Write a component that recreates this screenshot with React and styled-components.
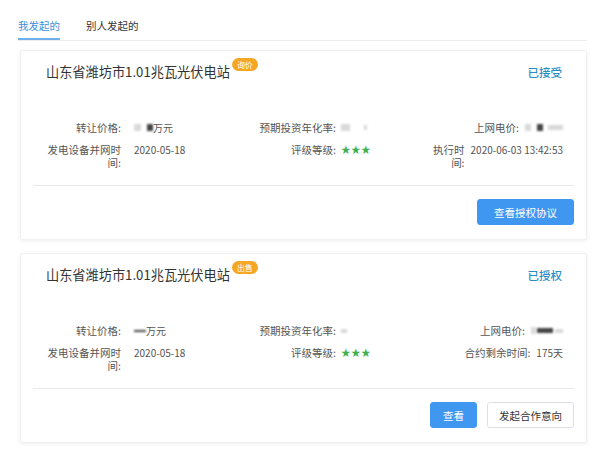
import styled, { createGlobalStyle } from 'styled-components';

const GlobalStyle = createGlobalStyle`
  body {
    margin: 0;
    background: #fff;
    font-family: "Noto Sans CJK SC", "Noto Sans", sans-serif;
    color: #333;
  }
`;

const Page = styled.div`
  width: 600px;
  height: 468px;
  overflow: hidden;
`;

const Inner = styled.div`
  padding: 0 13px 0 18px;
`;

const TabBar = styled.div`
  display: flex;
  gap: 26px;
  border-bottom: 1px solid #e9ebee;
`;

const Tab = styled.div`
  font-size: 10.5px;
  line-height: 16px;
  padding: 18px 0 4px;
  color: ${(p) => (p.$active ? '#3c8fdc' : '#333')};
  border-bottom: 2px solid ${(p) => (p.$active ? '#6fb0ea' : 'transparent')};
`;

const CardList = styled.div`
  display: flex;
  flex-direction: column;
  gap: 13px;
  margin: 9px 0 0 2px;
`;

const Card = styled.div`
  background: #fff;
  border: 1px solid #f0f1f3;
  border-radius: 2px;
  box-shadow: 0 1px 4px rgba(0, 0, 0, 0.07);
  padding: 11px 12px 14px;
`;

const Header = styled.div`
  display: flex;
  justify-content: space-between;
  align-items: center;
  padding: 0 12px 0 13px;
  height: 20px;
`;

const Title = styled.div`
  font-size: 13.2px;
  line-height: 20px;
  color: #333;
`;

const Badge = styled.span`
  position: relative;
  top: -9px;
  display: inline-block;
  margin-left: 2px;
  padding: 0 5px;
  height: 13px;
  line-height: 13px;
  border-radius: 7px;
  background: #f5a623;
  color: #fff;
  font-size: 8px;
  vertical-align: middle;
`;

const Status = styled.div`
  font-size: 11.5px;
  font-weight: 500;
  color: #2a8ec4;
`;

const InfoGrid = styled.div`
  display: grid;
  grid-template-columns: 215px 180px 125px;
  row-gap: 9px;
  margin-top: 39px;
  padding: 0 12px 0 10px;
  font-size: 10.5px;
  line-height: 13px;
  color: #555;
`;

const Cell = styled.div`
  display: flex;
  align-items: flex-start;
  justify-content: ${(p) => (p.$end ? 'flex-end' : 'flex-start')};
  gap: ${(p) => p.$gap || 6}px;
`;

const Label = styled.div`
  flex-shrink: 0;
  text-align: right;
  width: ${(p) => (p.$w ? `${p.$w}px` : 'auto')};
  white-space: ${(p) => (p.$w ? 'normal' : 'nowrap')};
`;

const Value = styled.div`
  display: flex;
  align-items: center;
  white-space: nowrap;
  font-size: 10px;
  color: #555;
  height: 13px;
`;

const Smudge = styled.span`
  display: inline-block;
  width: ${(p) => p.$w}px;
  height: ${(p) => p.$h || 7}px;
  margin-right: ${(p) => p.$gap || 0}px;
  background: ${(p) => (p.$dark ? '#444' : '#d9d9d9')};
  filter: blur(0.8px);
`;

const Stars = styled.span`
  color: #3fb24f;
  font-size: 9.5px;
  letter-spacing: 0.5px;
`;

const Divider = styled.div`
  height: 1px;
  background: #e6e8eb;
  margin-top: 16px;
`;

const Actions = styled.div`
  display: flex;
  justify-content: flex-end;
  gap: 10px;
  margin-top: 13px;
`;

const Button = styled.button`
  height: 26px;
  padding: 0 ${(p) => p.$pad || 12}px;
  border-radius: 3px;
  font-family: inherit;
  font-size: 10.5px;
  border: 1px solid ${(p) => (p.$primary ? '#3f97ef' : '#dcdfe6')};
  background: ${(p) => (p.$primary ? '#3f97ef' : '#fff')};
  color: ${(p) => (p.$primary ? '#fff' : '#333')};
`;

const BottomLine = styled.div`
  margin-top: 26px;
  border-top: 1px solid #e9ebee;
`;

const cards = [
  {
    badge: '询价',
    status: '已接受',
    price: (
      <>
        <Smudge $w={7} $gap={6} />
        <Smudge $w={6} $dark />万元
      </>
    ),
    rate: (
      <>
        <Smudge $w={9} $gap={14} />
        <Smudge $w={3} $h={5} />
      </>
    ),
    tariff: (
      <>
        <Smudge $w={6} $gap={6} />
        <Smudge $w={6} $dark $gap={5} />
        <Smudge $w={15} $h={5} />
      </>
    ),
    lastLabel: '执行时间:',
    lastWidth: 32,
    lastValue: '2020-06-03 13:42:53',
    buttons: [{ text: '查看授权协议', primary: true, pad: 16 }],
  },
  {
    badge: '出售',
    status: '已授权',
    price: (
      <>
        <Smudge $w={12} $h={2} $dark />万元
      </>
    ),
    rate: <Smudge $w={6} $h={4} />,
    tariff: (
      <>
        <Smudge $w={5} $gap={1} />
        <Smudge $w={16} $h={5} $dark $gap={2} />
        <Smudge $w={8} $h={4} />
      </>
    ),
    lastLabel: '合约剩余时间:',
    lastValue: '175天',
    buttons: [
      { text: '查看', primary: true, pad: 12 },
      { text: '发起合作意向', pad: 11 },
    ],
  },
];

const App = () => {
  return (
    <Page>
      <GlobalStyle />
      <Inner>
        <TabBar>
          <Tab $active>我发起的</Tab>
          <Tab>别人发起的</Tab>
        </TabBar>
        <CardList>
          {cards.map((c, i) => (
            <Card key={i}>
              <Header>
                <Title>
                  山东省潍坊市1.01兆瓦光伏电站
                  <Badge>{c.badge}</Badge>
                </Title>
                <Status>{c.status}</Status>
              </Header>
              <InfoGrid>
                <Cell $gap={13}>
                  <Label $w={78}>转让价格:</Label>
                  <Value>{c.price}</Value>
                </Cell>
                <Cell $gap={5}>
                  <Label $w={78}>预期投资年化率:</Label>
                  <Value>{c.rate}</Value>
                </Cell>
                <Cell $end>
                  <Label>上网电价:</Label>
                  <Value>{c.tariff}</Value>
                </Cell>
                <Cell $gap={13}>
                  <Label $w={78}>发电设备并网时间:</Label>
                  <Value>2020-05-18</Value>
                </Cell>
                <Cell $gap={5}>
                  <Label $w={78}>评级等级:</Label>
                  <Value>
                    <Stars>★★★</Stars>
                  </Value>
                </Cell>
                <Cell $end>
                  <Label $w={c.lastWidth}>{c.lastLabel}</Label>
                  <Value>{c.lastValue}</Value>
                </Cell>
              </InfoGrid>
              <Divider />
              <Actions>
                {c.buttons.map((b) => (
                  <Button key={b.text} $primary={b.primary} $pad={b.pad}>
                    {b.text}
                  </Button>
                ))}
              </Actions>
            </Card>
          ))}
        </CardList>
      </Inner>
      <BottomLine />
    </Page>
  );
};

export default App;
